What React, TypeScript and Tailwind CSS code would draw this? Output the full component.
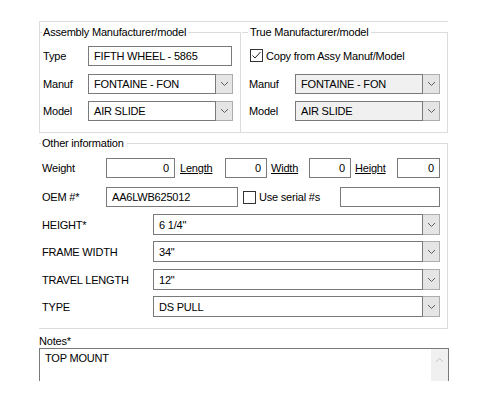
import React from "react";

const Chevron = ({ c = "#5f5f5f" }: { c?: string }) => (
  <svg width="9" height="6" viewBox="0 0 9 6">
    <path d="M1 1 L4.5 4.5 L8 1" fill="none" stroke={c} strokeWidth="1" />
  </svg>
);

function Combo({ value, cls, fieldBg }: { value: string; cls: string; fieldBg: string }) {
  return (
    <div className={`flex ${cls}`}>
      <div className={`flex-1 border border-[#7a7a7a] ${fieldBg} pl-[5px] flex items-center whitespace-nowrap overflow-hidden`}>
        {value}
      </div>
      <div className="w-[17px] border-y border-r border-[#adadad] bg-[#e5e5e5] flex items-center justify-center">
        <Chevron />
      </div>
    </div>
  );
}

function Check({ checked }: { checked?: boolean }) {
  return (
    <div className="w-[13px] h-[13px] border border-[#333333] bg-white flex items-center justify-center shrink-0">
      {checked && (
        <svg width="11" height="11" viewBox="0 0 11 11">
          <path d="M1.5 5.5 L4 8 L9.5 2" fill="none" stroke="#222222" strokeWidth="1" />
        </svg>
      )}
    </div>
  );
}

export default function App() {
  return (
    <div
      className="w-[500px] h-[400px] bg-white text-black text-[11px] leading-[14px] tracking-[-0.2px] pt-[21px] pl-[39px]"
      style={{ fontFamily: '"Liberation Sans", Arial, sans-serif' }}
    >
      {/* Top row */}
      <div className="w-[409px] h-[112px] flex border-t border-l border-b border-[#dcdcdc]">
        {/* Assembly groupbox */}
        <div className="w-[201px] flex flex-col">
          <div className="h-[21px] flex items-start">
            <div className="w-[2px] h-px bg-[#dcdcdc] mt-[10px]" />
            <div className="ml-[1px] leading-[21px] whitespace-nowrap">Assembly Manufacturer/model</div>
            <div className="flex-1 self-stretch mt-[10px] ml-[2px] border-t border-r border-[#dcdcdc]" />
          </div>
          <div className="flex-1 border-r border-[#dcdcdc] pl-[3px] pt-[3px] flex flex-col">
            <div className="flex items-center h-[20px]">
              <div className="w-[45px]">Type</div>
              <div className="w-[144px] h-[20px] border border-[#7a7a7a] pl-[5px] flex items-center">FIFTH WHEEL - 5865</div>
            </div>
            <div className="flex items-center h-[20px] mt-[8px]">
              <div className="w-[45px]">Manuf</div>
              <Combo value="FONTAINE - FON" cls="w-[145px] h-[20px]" fieldBg="bg-white" />
            </div>
            <div className="flex items-center h-[20px] mt-[7px]">
              <div className="w-[45px]">Model</div>
              <Combo value="AIR SLIDE" cls="w-[145px] h-[20px]" fieldBg="bg-white" />
            </div>
          </div>
        </div>
        {/* True groupbox */}
        <div className="w-[207px] flex flex-col">
          <div className="h-[21px] flex items-start">
            <div className="ml-[1px] w-[6px] h-px bg-[#dcdcdc] mt-[10px]" />
            <div className="ml-[2px] leading-[21px] whitespace-nowrap">True Manufacturer/model</div>
            <div className="flex-1 self-stretch mt-[10px] ml-[2px] border-t border-r border-[#dcdcdc]" />
          </div>
          <div className="flex-1 border-r border-[#dcdcdc] flex flex-col">
            <div className="flex items-center h-[13px] mt-[6px] pl-[9px]">
              <Check checked />
              <div className="ml-[3px] whitespace-nowrap">Copy from Assy Manuf/Model</div>
            </div>
            <div className="flex items-center h-[20px] mt-[12px] pl-[8px]">
              <div className="w-[46px]">Manuf</div>
              <Combo value="FONTAINE - FON" cls="w-[145px] h-[20px]" fieldBg="bg-[#f0f0f0]" />
            </div>
            <div className="flex items-center h-[20px] mt-[7px] pl-[8px]">
              <div className="w-[46px]">Model</div>
              <Combo value="AIR SLIDE" cls="w-[145px] h-[20px]" fieldBg="bg-[#f0f0f0]" />
            </div>
          </div>
        </div>
      </div>

      {/* Other information */}
      <div className="w-[409px] flex flex-col">
        <div className="h-[21px] flex items-start">
          <div className="w-[2px] h-px bg-[#dcdcdc] mt-[10px]" />
          <div className="ml-[1px] leading-[21px] whitespace-nowrap">Other information</div>
          <div className="flex-1 self-stretch mt-[10px] ml-[3px] border-t border-r border-[#dcdcdc]" />
        </div>
        <div className="border-r border-b border-[#dcdcdc] pl-[3px] pr-[7px] pt-[4px] pb-[11px] flex flex-col">
          <div className="flex items-center h-[20px]">
            <div className="w-[64px]">Weight</div>
            <div className="w-[69px] h-[20px] border border-[#7a7a7a] pr-[5px] flex items-center justify-end">0</div>
            <div className="ml-[5px] w-[45px] underline">Length</div>
            <div className="w-[42px] h-[20px] border border-[#7a7a7a] pr-[5px] flex items-center justify-end">0</div>
            <div className="ml-[4px] w-[38px] underline">Width</div>
            <div className="w-[42px] h-[20px] border border-[#7a7a7a] pr-[5px] flex items-center justify-end">0</div>
            <div className="ml-[4px] w-[42px] underline">Height</div>
            <div className="w-[43px] h-[20px] border border-[#7a7a7a] pr-[5px] flex items-center justify-end">0</div>
          </div>
          <div className="flex items-center h-[20px] mt-[9px]">
            <div className="w-[64px]">OEM #*</div>
            <div className="w-[132px] h-[20px] border border-[#7a7a7a] pl-[5px] flex items-center">AA6LWB625012</div>
            <div className="ml-[5px]">
              <Check />
            </div>
            <div className="ml-[3px] whitespace-nowrap">Use serial #s</div>
            <div className="ml-auto w-[100px] h-[20px] border border-[#7a7a7a]" />
          </div>
          <div className="flex items-center h-[21px] mt-[7px]">
            <div className="w-[111px]">HEIGHT*</div>
            <Combo value={'6 1/4"'} cls="flex-1 h-[21px]" fieldBg="bg-white" />
          </div>
          <div className="flex items-center h-[21px] mt-[6px]">
            <div className="w-[111px]">FRAME WIDTH</div>
            <Combo value={'34"'} cls="flex-1 h-[21px]" fieldBg="bg-white" />
          </div>
          <div className="flex items-center h-[21px] mt-[7px]">
            <div className="w-[111px]">TRAVEL LENGTH</div>
            <Combo value={'12"'} cls="flex-1 h-[21px]" fieldBg="bg-white" />
          </div>
          <div className="flex items-center h-[21px] mt-[6px]">
            <div className="w-[111px]">TYPE</div>
            <Combo value="DS PULL" cls="flex-1 h-[21px]" fieldBg="bg-white" />
          </div>
        </div>
      </div>

      {/* Notes */}
      <div className="mt-[5px] h-[14px]">Notes*</div>
      <div className="w-[410px] h-[33px] border-t border-l border-r border-[#7a7a7a] flex">
        <div className="flex-1 pl-[5px] pt-[2px]">TOP MOUNT</div>
        <div className="w-[17px] bg-[#f0f0f0] flex justify-center pt-[8px]">
          <svg width="9" height="6" viewBox="0 0 9 6">
            <path d="M1 5 L4.5 1.5 L8 5" fill="none" stroke="#c2c2c2" strokeWidth="1" />
          </svg>
        </div>
      </div>
    </div>
  );
}
